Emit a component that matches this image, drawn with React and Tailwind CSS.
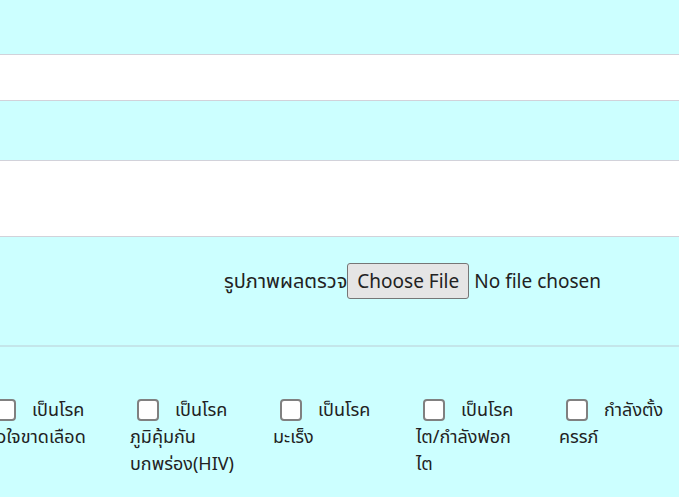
import React from "react";

const diseases = [
  { lines: ["เป็นโรค", "หัวใจขาดเลือด"] },
  { lines: ["เป็นโรค", "ภูมิคุ้มกัน", "บกพร่อง(HIV)"] },
  { lines: ["เป็นโรค", "มะเร็ง"] },
  { lines: ["เป็นโรค", "ไต/กำลังฟอก", "ไต"] },
  { lines: ["กำลังตั้ง", "ครรภ์"] },
];

const DiseaseCheck = ({ lines }) => (
  <label className="w-[143px] shrink-0 text-[18px] leading-[27px] text-[#222]">
    <div className="flex items-center pl-[7px]">
      <span className="box-border h-[22px] w-[22px] shrink-0 rounded-[4px] border-2 border-[#808080] bg-white" />
      <span className="ml-[16px]">{lines[0]}</span>
    </div>
    {lines.slice(1).map((l) => (
      <div key={l}>{l}</div>
    ))}
  </label>
);

const App = () => {
  return (
    <div
      className="h-[497px] w-[679px] overflow-hidden bg-[#ccffff]"
      style={{ fontFamily: '"Noto Sans", "Noto Sans Thai", Tahoma, sans-serif' }}
    >
      <div className="h-[55px] border-b border-[#d2d2da] bg-[#ccffff]" />
      <div className="h-[46px] border-b border-[#d2d2da] bg-white" />
      <div className="h-[60px] border-b border-[#d2d2da] bg-[#ccffff]" />
      <div className="h-[76px] border-b border-[#d2d2da] bg-white" />
      <div className="flex h-[110px] items-start border-b-2 border-[#c4e6ea] bg-[#ccffff] pl-[224px] pt-[26px] text-[19px] text-[#222]">
        <span className="text-[20px] leading-[36px]">รูปภาพผลตรวจ</span>
        <span className="box-border flex h-[36px] w-[122px] items-center justify-center rounded-[3px] border border-[#767676] bg-[#e5e5e5]">
          Choose File
        </span>
        <span className="ml-[5px] leading-[36px]">No file chosen</span>
      </div>
      <div className="ml-[-13px] flex pt-[49px]">
        {diseases.map((d, i) => (
          <DiseaseCheck key={i} lines={d.lines} />
        ))}
      </div>
    </div>
  );
};

export default App;
